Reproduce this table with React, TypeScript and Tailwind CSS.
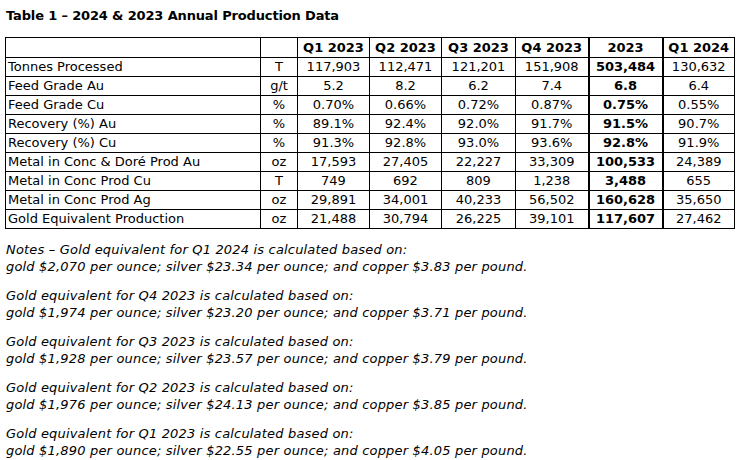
import React from "react";

const rows: [string, string, string[]][] = [
  ["Tonnes Processed", "T", ["117,903", "112,471", "121,201", "151,908", "503,484", "130,632"]],
  ["Feed Grade Au", "g/t", ["5.2", "8.2", "6.2", "7.4", "6.8", "6.4"]],
  ["Feed Grade Cu", "%", ["0.70%", "0.66%", "0.72%", "0.87%", "0.75%", "0.55%"]],
  ["Recovery (%) Au", "%", ["89.1%", "92.4%", "92.0%", "91.7%", "91.5%", "90.7%"]],
  ["Recovery (%) Cu", "%", ["91.3%", "92.8%", "93.0%", "93.6%", "92.8%", "91.9%"]],
  ["Metal in Conc & Doré Prod Au", "oz", ["17,593", "27,405", "22,227", "33,309", "100,533", "24,389"]],
  ["Metal in Conc Prod Cu", "T", ["749", "692", "809", "1,238", "3,488", "655"]],
  ["Metal in Conc Prod Ag", "oz", ["29,891", "34,001", "40,233", "56,502", "160,628", "35,650"]],
  ["Gold Equivalent Production", "oz", ["21,488", "30,794", "26,225", "39,101", "117,607", "27,462"]],
];

const headers = ["Q1 2023", "Q2 2023", "Q3 2023", "Q4 2023", "2023", "Q1 2024"];

const notes: [string, string][] = [
  [
    "Notes – Gold equivalent for Q1 2024 is calculated based on:",
    "gold $2,070 per ounce; silver $23.34 per ounce; and copper $3.83 per pound.",
  ],
  [
    "Gold equivalent for Q4 2023 is calculated based on:",
    "gold $1,974 per ounce; silver $23.20 per ounce; and copper $3.71 per pound.",
  ],
  [
    "Gold equivalent for Q3 2023 is calculated based on:",
    "gold $1,928 per ounce; silver $23.57 per ounce; and copper $3.79 per pound.",
  ],
  [
    "Gold equivalent for Q2 2023 is calculated based on:",
    "gold $1,976 per ounce; silver $24.13 per ounce; and copper $3.85 per pound.",
  ],
  [
    "Gold equivalent for Q1 2023 is calculated based on:",
    "gold $1,890 per ounce; silver $22.55 per ounce; and copper $4.05 per pound.",
  ],
];

export default function App() {
  return (
    <div className="w-[750px] h-[460px] bg-white text-black overflow-hidden font-['DejaVu_Sans',sans-serif] text-[13px]">
      <div className="pl-[6px] pt-[8px] font-bold leading-[16px] tracking-[-0.15px]">
        Table 1 – 2024 &amp; 2023 Annual Production Data
      </div>
      <table className="ml-[5px] mt-[13px] w-[729px] table-fixed border-collapse leading-[16px]">
        <colgroup>
          <col className="w-[255px]" />
          <col className="w-[37px]" />
          <col className="w-[72px]" />
          <col className="w-[72px]" />
          <col className="w-[74px]" />
          <col className="w-[73px]" />
          <col className="w-[74px]" />
          <col className="w-[72px]" />
        </colgroup>
        <thead>
          <tr className="h-[20px]">
            <th className="border border-black p-0"></th>
            <th className="border border-black p-0"></th>
            {headers.map((h, i) => (
              <th
                key={h}
                className={
                  i === 4
                    ? "border border-black border-x-2 p-0 text-center font-bold"
                    : "border border-black p-0 text-center font-bold"
                }
              >
                {h}
              </th>
            ))}
          </tr>
        </thead>
        <tbody>
          {rows.map(([label, unit, vals]) => (
            <tr key={label} className="h-[19px]">
              <td className="border border-black py-0 pl-[2px] pr-0 whitespace-nowrap">{label}</td>
              <td className="border border-black p-0 text-center">{unit}</td>
              {vals.map((v, i) => (
                <td
                  key={i}
                  className={
                    i === 4
                      ? "border border-black border-x-2 p-0 text-center font-bold"
                      : "border border-black p-0 text-center"
                  }
                >
                  {v}
                </td>
              ))}
            </tr>
          ))}
        </tbody>
      </table>
      <div className="pl-[6px] pt-[12px] italic leading-[17px] tracking-[0.18px] flex flex-col gap-[12px]">
        {notes.map(([a, b]) => (
          <div key={a}>
            <div>{a}</div>
            <div>{b}</div>
          </div>
        ))}
      </div>
    </div>
  );
}
